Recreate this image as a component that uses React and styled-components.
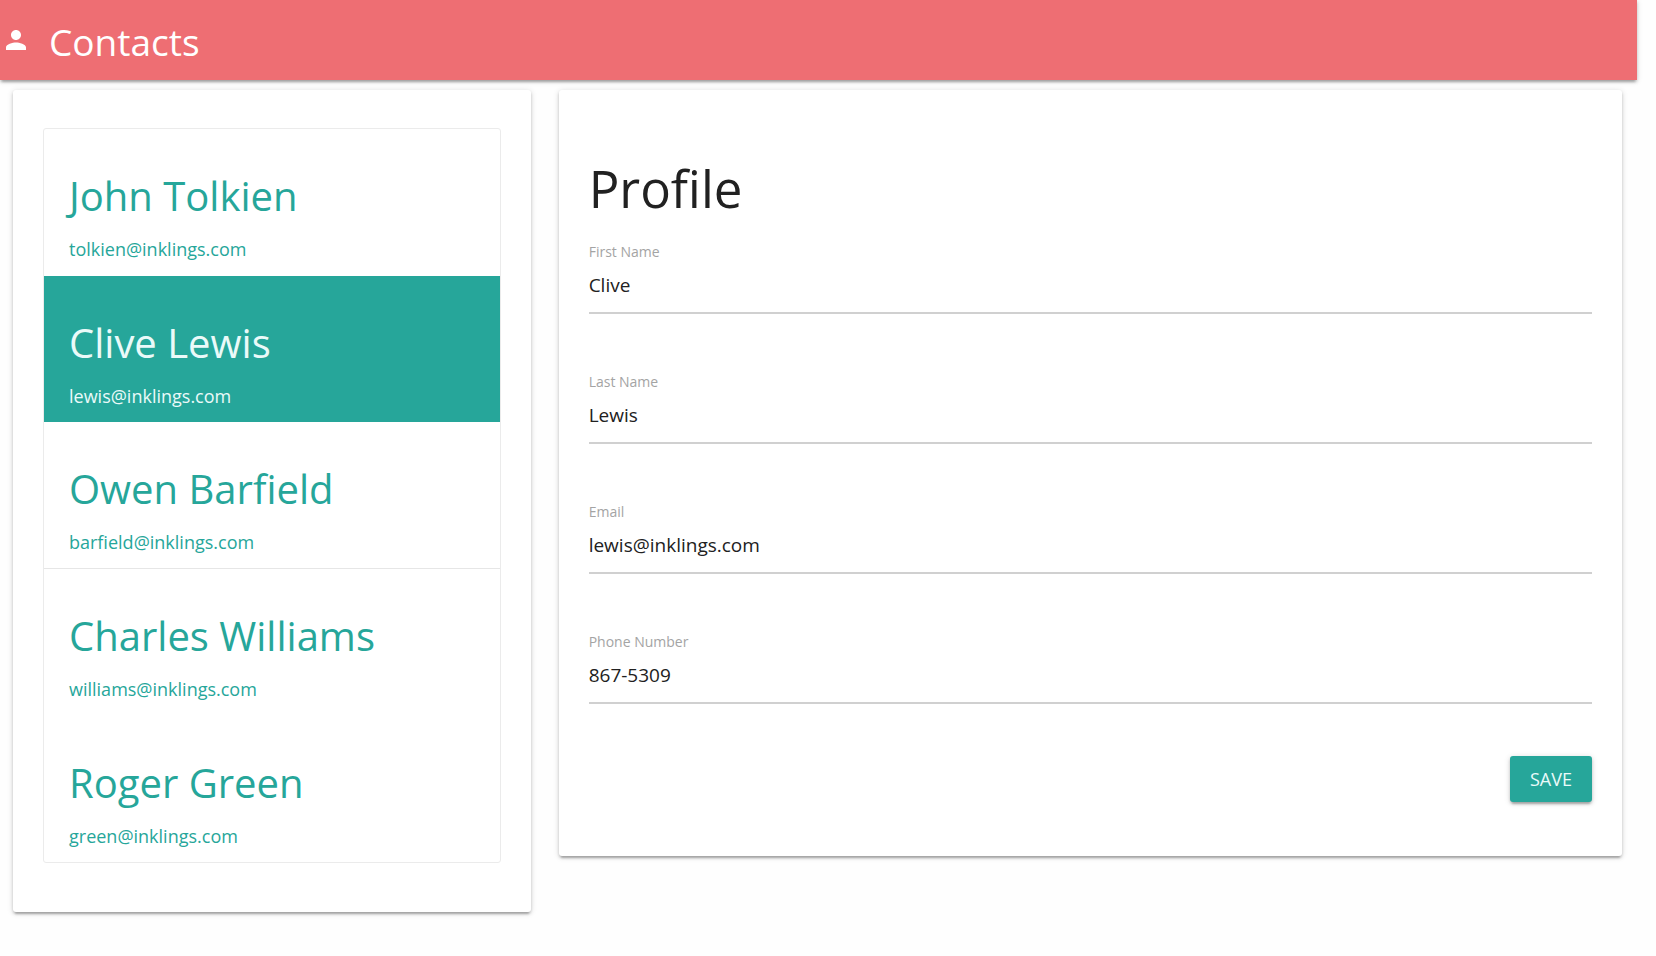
import React, { useState } from "react";
import styled, { createGlobalStyle } from "styled-components";

const GlobalStyle = createGlobalStyle`
  *, *::before, *::after { box-sizing: border-box; }
  body {
    margin: 0;
    background: #fefefe;
    color: #212121;
    font-family: "Segoe UI", "Open Sans", "Noto Sans", sans-serif;
  }
`;

const raised = "0 2px 3px 0 rgba(0,0,0,0.18), 0 4px 2px -2px rgba(0,0,0,0.16), 0 1px 6px 0 rgba(0,0,0,0.14)";

const Page = styled.div`
  margin-right: 19px;
`;

const Header = styled.header`
  display: flex;
  align-items: center;
  gap: 18px;
  height: 80px;
  padding-left: 1px;
  background: #ee6e73;
  color: #fff;
  box-shadow: ${raised};
`;

const HeaderTitle = styled.h1`
  margin: 0;
  padding-top: 4px;
  font-size: 37px;
  font-weight: 400;
  line-height: 50px;
`;

const Columns = styled.main`
  display: grid;
  grid-template-columns: 1fr 2fr;
  align-items: start;
  padding: 10px 0 40px;
`;

const Card = styled.section`
  margin: 0 15px 0 13px;
  padding: ${(p) => p.$pad};
  background: #fff;
  border-radius: 3px;
  box-shadow: ${raised};
`;

const ContactList = styled.ul`
  display: grid;
  grid-auto-rows: 1fr;
  min-height: 735px;
  margin: 0;
  padding: 0;
  list-style: none;
  border: 1px solid #ebebeb;
  border-radius: 3px;
`;

const ContactRow = styled.li`
  display: grid;
  border-bottom: 1px solid ${(p) => (p.$divided ? "#e6e6e6" : "transparent")};
`;

const ContactButton = styled.button`
  padding: 42px 25px 11px;
  border: 0;
  text-align: left;
  font-family: inherit;
  cursor: pointer;
  margin-bottom: ${(p) => (p.$active ? "-1px" : "0")};
  background: ${(p) => (p.$active ? "#26a69a" : "transparent")};
  color: ${(p) => (p.$active ? "#eafaf9" : "#26a69a")};
`;

const ContactName = styled.span`
  display: block;
  margin-bottom: 14px;
  font-size: 40px;
  line-height: 50px;
`;

const ContactEmail = styled.span`
  display: block;
  font-size: 18px;
  line-height: 28px;
`;

const ProfileTitle = styled.h2`
  margin: 0 0 22px;
  font-size: 51px;
  font-weight: 400;
  line-height: 64px;
`;

const Form = styled.form`
  display: flex;
  flex-direction: column;
`;

const Field = styled.div`
  display: flex;
  flex-direction: column;
  margin-bottom: 58px;

  &:last-of-type { margin-bottom: 52px; }
`;

const Label = styled.label`
  font-size: 14px;
  line-height: 20px;
  color: #a4a4a4;
`;

const Input = styled.input`
  height: 52px;
  padding: 0 0 5px;
  border: 0;
  border-bottom: 2px solid #d0d0d0;
  outline: 0;
  background: transparent;
  color: #212121;
  font-family: inherit;
  font-size: 19px;
`;

const SaveButton = styled.button`
  align-self: flex-end;
  height: 46px;
  padding: 0 20px;
  border: 0;
  border-radius: 3px;
  background: #26a69a;
  color: #eafaf9;
  box-shadow: ${raised};
  font-family: inherit;
  font-size: 18px;
  text-transform: uppercase;
  cursor: pointer;
`;

const PersonIcon = () => (
  <svg width="30" height="30" viewBox="0 0 24 24" fill="currentColor" aria-hidden="true">
    <path d="M12 12c2.21 0 4-1.79 4-4s-1.79-4-4-4-4 1.79-4 4 1.79 4 4 4zm0 2c-2.67 0-8 1.34-8 4v2h16v-2c0-2.66-5.33-4-8-4z" />
  </svg>
);

const contacts = [
  { first: "John", last: "Tolkien", email: "tolkien@inklings.com", phone: "" },
  { first: "Clive", last: "Lewis", email: "lewis@inklings.com", phone: "867-5309" },
  { first: "Owen", last: "Barfield", email: "barfield@inklings.com", phone: "", divided: true },
  { first: "Charles", last: "Williams", email: "williams@inklings.com", phone: "" },
  { first: "Roger", last: "Green", email: "green@inklings.com", phone: "" },
];

const fields = [
  { key: "first", label: "First Name", type: "text" },
  { key: "last", label: "Last Name", type: "text" },
  { key: "email", label: "Email", type: "email" },
  { key: "phone", label: "Phone Number", type: "tel" },
];

export default function App() {
  const [selected, setSelected] = useState(1);

  return (
    <>
      <GlobalStyle />
      <Page>
        <Header>
          <PersonIcon />
          <HeaderTitle>Contacts</HeaderTitle>
        </Header>
        <Columns>
          <Card $pad="38px 30px 49px">
            <ContactList>
              {contacts.map((c, i) => (
                <ContactRow key={c.email} $divided={c.divided}>
                  <ContactButton type="button" $active={i === selected} onClick={() => setSelected(i)}>
                    <ContactName>{c.first} {c.last}</ContactName>
                    <ContactEmail>{c.email}</ContactEmail>
                  </ContactButton>
                </ContactRow>
              ))}
            </ContactList>
          </Card>
          <Card $pad="66px 30px 54px">
            <ProfileTitle>Profile</ProfileTitle>
            <Form key={selected} onSubmit={(e) => e.preventDefault()}>
              {fields.map((f) => (
                <Field key={f.key}>
                  <Label htmlFor={f.key}>{f.label}</Label>
                  <Input id={f.key} type={f.type} defaultValue={contacts[selected][f.key]} />
                </Field>
              ))}
              <SaveButton type="submit">Save</SaveButton>
            </Form>
          </Card>
        </Columns>
      </Page>
    </>
  );
}
